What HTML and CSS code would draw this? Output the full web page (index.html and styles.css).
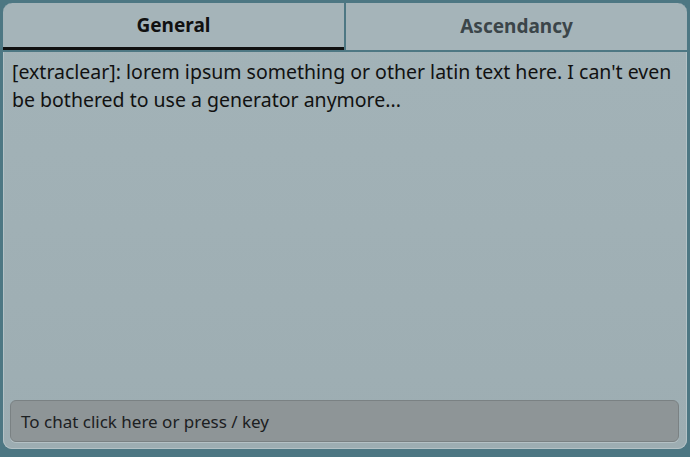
FILE: index.html
```html
<!DOCTYPE html>
<html lang="en">
<head>
    <meta charset="UTF-8">
    <meta name="viewport" content="width=device-width, initial-scale=1.0">
    <title>Chat</title>
    <link rel="stylesheet" href="styles.css">
</head>
<body>

    <div class="panel">
        <div class="tabs">
            <div class="tab active">General</div>
            <div class="tab">Ascendancy</div>
        </div>
        <div class="messages">
            <p class="msg">[extraclear]: lorem ipsum something or other latin text here. I can't even be bothered to use a generator anymore...</p>
        </div>
        <div class="chat-input">To chat click here or press / key</div>
    </div>

</body>
</html>
```

FILE: styles.css
```css
body {
    margin: 0;
    padding: 3px 3px 8px 3px;
    background: #4d7783;
    font-family: 'Noto Sans', sans-serif;
    height: 457px;
    box-sizing: border-box;
}

.panel {
    height: 446px;
    background: linear-gradient(to bottom, #a3b3b8, #9dadb2);
    border-radius: 9px;
    display: flex;
    flex-direction: column;
    overflow: hidden;
    box-shadow: inset 0 0 0 1px #b4c2c6;
}

.tabs {
    display: flex;
    gap: 2px;
    background: #4d7783;
    padding-bottom: 2px;
}

.tab {
    flex: 1;
    height: 47px;
    display: flex;
    align-items: center;
    justify-content: center;
    background: #a5b4b9;
    font-size: 19px;
    font-weight: bold;
    color: #3b4549;
    box-sizing: border-box;
    padding-bottom: 2px;
}

.tab:first-child {
    border-top-left-radius: 9px;
}

.tab:last-child {
    border-top-right-radius: 9px;
}

.tab.active {
    color: #111;
    border-bottom: 3px solid #111;
    padding-bottom: 0;
}

.messages {
    flex: 1;
    padding: 6px 9px;
}

.msg {
    margin: 0;
    font-size: 19.5px;
    line-height: 28px;
    color: #111;
}

.chat-input {
    margin: 0 8px 7px 7px;
    height: 42px;
    box-sizing: border-box;
    background: #8e9597;
    border: 1px solid #7a8183;
    border-radius: 6px;
    box-shadow: 0 1px 0 #b4c1c5;
    display: flex;
    align-items: center;
    padding-left: 10px;
    font-size: 17px;
    color: #1c2022;
}
```
